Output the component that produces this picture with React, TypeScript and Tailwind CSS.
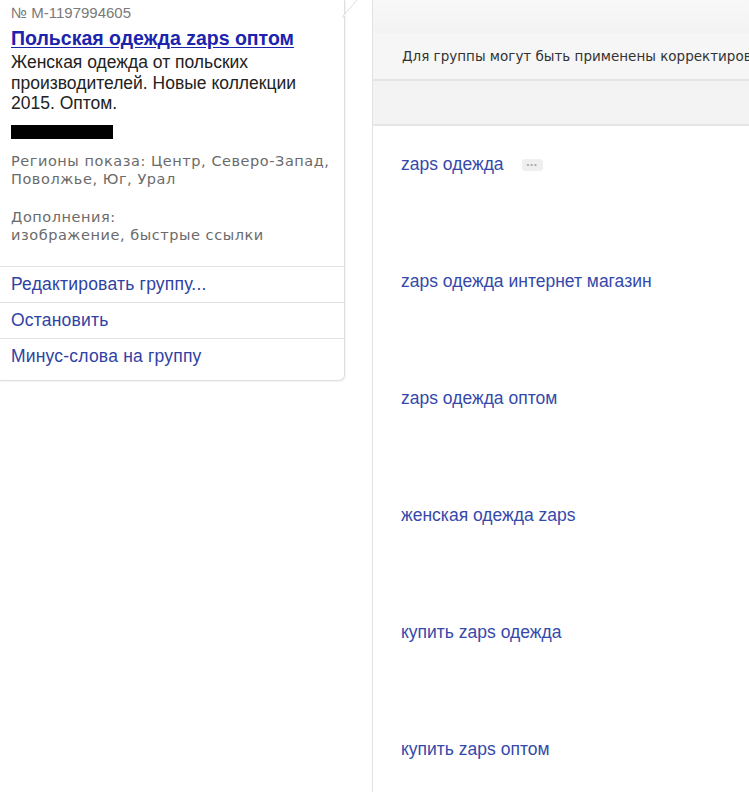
import React from 'react';

const keywords = [
  'zaps одежда',
  'zaps одежда интернет магазин',
  'zaps одежда оптом',
  'женская одежда zaps',
  'купить zaps одежда',
  'купить zaps оптом',
];

const actions = ['Редактировать группу...', 'Остановить', 'Минус-слова на группу'];

export default function App() {
  return (
    <div className="flex w-[749px] h-[792px] overflow-hidden bg-white font-['Liberation_Sans',Arial,sans-serif]">
      {/* Left: group popup */}
      <div className="w-[372px] shrink-0">
        <div className="relative w-[345px] border-r border-b border-[#dedede] rounded-br-[6px] shadow-[1px_1px_2px_rgba(0,0,0,0.05)]">
          <svg className="absolute -right-[18px] top-0" width="20" height="18" viewBox="0 0 20 18">
            <path d="M1 18 L1 16 L15 0" fill="white" stroke="#dedede" strokeWidth="1" />
          </svg>
          <div className="pl-[11px] pr-3">
            <div className="pt-[3px] text-[15px] leading-[20px] text-[#7a7a7a]">№ M-1197994605</div>
            <div className="mt-[4px] text-[19.5px] leading-[22px] font-bold text-[#1c23ad] underline underline-offset-2">
              Польская одежда zaps оптом
            </div>
            <div className="mt-[3px] text-[17.5px] leading-[20.5px] text-[#222]">
              Женская одежда от польских производителей. Новые коллекции 2015. Оптом.
            </div>
            <div className="mt-[11px] h-[14px] w-[102px] bg-black" />
            <div className="mt-[13px] font-['DejaVu_Sans',Verdana,sans-serif] text-[14.5px] leading-[18px] text-[#6b6b6b] tracking-[0.55px]">
              Регионы показа: Центр, Северо-Запад, Поволжье, Юг, Урал
            </div>
            <div className="mt-[20px] font-['DejaVu_Sans',Verdana,sans-serif] text-[14.5px] leading-[18px] text-[#6b6b6b] tracking-[0.55px]">
              <div>Дополнения:</div>
              <div>изображение, быстрые ссылки</div>
            </div>
          </div>
          <div className="mt-[22px]">
            {actions.map((a) => (
              <div key={a} className="border-t border-[#e3e3e3] pl-[11px] h-[36px] flex items-center text-[17.5px] tracking-[0.2px] text-[#2f42a3]">
                {a}
              </div>
            ))}
            <div className="h-[6px]" />
          </div>
        </div>
      </div>

      {/* Right: phrases */}
      <div className="flex-1 border-l border-[#e2e2e2] flex flex-col min-w-0">
        <div className="shrink-0 h-[33px] bg-gradient-to-b from-[#f8f8f8] to-[#f3f3f3]" />
        <div className="shrink-0 h-[48px] bg-[#f6f6f6] border-b-2 border-[#e4e4e4] flex items-center pl-[29px] whitespace-nowrap overflow-hidden font-['DejaVu_Sans',Verdana,sans-serif] text-[13.5px] text-[#333]">
          Для группы могут быть применены корректиров
        </div>
        <div className="shrink-0 h-[45px] bg-[#f3f3f3] border-b-2 border-[#e6e6e6]" />
        <div className="flex flex-col">
          {keywords.map((k, i) => (
            <div key={k} className="shrink-0 h-[117px] pt-[27px] pl-[28px] flex items-start">
              <span className="text-[17.5px] leading-[22px] text-[#3549aa]">{k}</span>
              {i === 0 && (
                <span className="ml-[18px] mt-[6px] h-[12px] w-[21px] rounded-[3px] bg-[#efefef] flex items-center justify-center text-[8px] leading-none tracking-[1px] text-[#aaa]">
                  •••
                </span>
              )}
            </div>
          ))}
        </div>
      </div>
    </div>
  );
}
